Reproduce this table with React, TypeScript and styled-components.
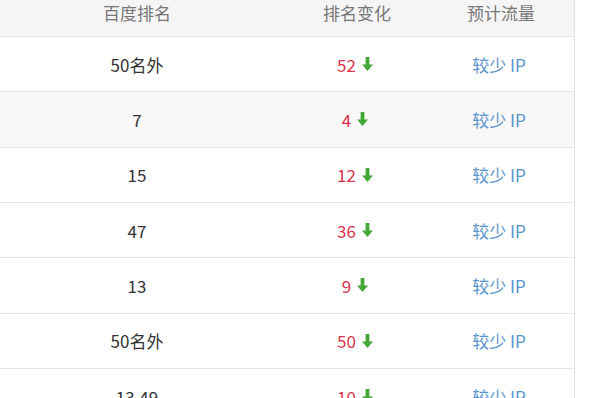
import React from "react";
import styled, { createGlobalStyle } from "styled-components";

const GlobalStyle = createGlobalStyle`
  html, body {
    margin: 0;
    padding: 0;
    background: #fff;
  }
  body {
    font-family: "Noto Sans CJK SC", "Microsoft YaHei", sans-serif;
    overflow: hidden;
  }
`;

const Table = styled.div`
  width: 574px;
  border-right: 1px solid #e4e4e4;
`;

const Row = styled.div<{ $striped?: boolean }>`
  display: grid;
  grid-template-columns: 274px 166px 1fr;
  padding-right: 12px;
  height: 55.33px;
  box-sizing: border-box;
  align-items: center;
  border-bottom: 1px solid #e6e6e6;
  background: ${props => (props.$striped ? "#f8f8f8" : "#fff")};
  font-size: 17px;
  color: #333;
`;

const HeadRow = styled(Row)`
  height: 37px;
  align-items: start;
  padding-top: 3px;
  background: #f5f5f5;
  color: #777;
  line-height: 20px;
`;

const Cell = styled.div`
  text-align: center;
  white-space: nowrap;
`;

const Change = styled.span`
  display: inline-flex;
  align-items: center;
  gap: 6px;
  color: #d8344f;
  padding-right: 4px;
`;

const Flow = styled.span`
  color: #5a94cc;
  padding-right: 4px;
`;

const DownArrow = () => (
  <svg width="11" height="14" viewBox="0 0 11 14">
    <path d="M3.6 0h3.8v7.4H11L5.5 14 0 7.4h3.6z" fill="#43a838" />
  </svg>
);

interface IRank {
  rank: string;
  change: number;
}

const rows: IRank[] = [
  { rank: "50名外", change: 52 },
  { rank: "7", change: 4 },
  { rank: "15", change: 12 },
  { rank: "47", change: 36 },
  { rank: "13", change: 9 },
  { rank: "50名外", change: 50 },
  { rank: "13.49", change: 10 }
];

export default function App() {
  return (
    <>
      <GlobalStyle />
      <Table>
        <HeadRow>
          <Cell>百度排名</Cell>
          <Cell>排名变化</Cell>
          <Cell>预计流量</Cell>
        </HeadRow>
        {rows.map((r, i) => (
          <Row key={i} $striped={i === 1}>
            <Cell>{r.rank}</Cell>
            <Cell>
              <Change>
                {r.change}
                <DownArrow />
              </Change>
            </Cell>
            <Cell>
              <Flow>较少 IP</Flow>
            </Cell>
          </Row>
        ))}
      </Table>
    </>
  );
}
